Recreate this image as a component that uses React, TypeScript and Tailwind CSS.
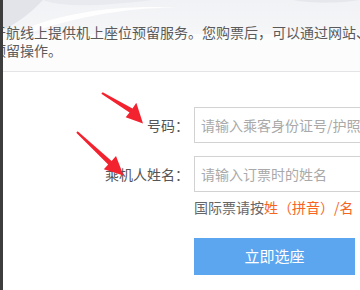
import React from 'react';

const font = { fontFamily: '"Noto Sans CJK SC", "Noto Sans", sans-serif' };

function Arrows() {
  // red annotation arrows drawn over the form
  return (
    <svg className="absolute inset-0 pointer-events-none" width="360" height="290" viewBox="0 0 360 290">
      <polygon
        points="101.3,93.8 102.7,92.2 132.5,108.5 136.3,102.8 143,123.5 125.7,117.2 129.5,112.4"
        fill="#f2232f"
      />
      <polygon
        points="76.3,132.7 77.7,131.3 111.6,160.9 116,156.1 123.5,175.5 103.8,169.3 108.2,164.5"
        fill="#f2232f"
      />
    </svg>
  );
}

function HeaderBg() {
  return (
    <svg className="absolute inset-0" width="357" height="72" viewBox="0 0 357 72" preserveAspectRatio="none">
      <defs>
        <linearGradient id="g1" x1="0" y1="0" x2="0" y2="1">
          <stop offset="0" stopColor="#f1f2f5" />
          <stop offset="1" stopColor="#fbfbfc" />
        </linearGradient>
      </defs>
      <rect width="357" height="72" fill="url(#g1)" />
      <path d="M0 0 L40 0 C30 10 20 20 0 30 Z" fill="#e3e4ea" />
      <path d="M20 30 C60 12 120 4 180 8 C140 6 80 14 30 32 Z" fill="#ffffff" opacity="0.9" />
      <path d="M40 0 C60 8 100 6 150 0 Z" fill="#e9eaef" />
      <path d="M290 0 C310 4 340 3 357 0 Z" fill="#e6e7ec" />
      <rect y="34" width="357" height="38" fill="#fdfdfd" opacity="0.8" />
    </svg>
  );
}

export default function App() {
  return (
    <div className="relative flex w-[360px] h-[290px] overflow-hidden bg-white" style={font}>
      <div className="w-[3px] shrink-0 bg-[#3d3d3d]" />
      <div className="w-[357px] shrink-0 flex flex-col overflow-hidden">
        {/* notice header */}
        <div className="relative h-[72px] shrink-0 border-b border-[#e4e4e6] overflow-hidden">
          <HeaderBg />
          <div className="relative pt-[23px] ml-[-11px] text-[14px] leading-[18px] text-[#5a5a5a] whitespace-nowrap">
            <p>于航线上提供机上座位预留服务。您购票后，可以通过网站、</p>
            <p>预留操作。</p>
          </div>
        </div>

        {/* form */}
        <div className="flex flex-col pt-[35px]">
          <div className="flex items-center">
            <label className="w-[186px] shrink-0 text-right text-[14px] text-[#555]">号码：</label>
            <div className="ml-[5px] w-[200px] h-[36px] shrink-0 border border-[#d2d2d2] flex items-center pl-[6px] text-[14px] text-[#a9a9a9] whitespace-nowrap">
              请输入乘客身份证号/护照号
            </div>
          </div>
          <div className="flex items-center mt-[13px]">
            <label className="w-[186px] shrink-0 text-right text-[14px] text-[#555]">乘机人姓名：</label>
            <div className="ml-[5px] w-[200px] h-[36px] shrink-0 border border-[#d2d2d2] flex items-center pl-[6px] text-[14px] text-[#a9a9a9] whitespace-nowrap">
              请输入订票时的姓名
            </div>
          </div>
          <p className="pl-[191px] mt-[6px] text-[14px] leading-[18px] text-[#666] whitespace-nowrap">
            国际票请按<span className="text-[#f7641e]">姓（拼音）/名（拼音）</span>
          </p>
          <div className="pl-[191px] mt-[22px]">
            <button className="w-[161px] h-[37px] bg-[#5ca6f0] text-white text-[15px]">立即选座</button>
          </div>
        </div>
      </div>
      <Arrows />
    </div>
  );
}
